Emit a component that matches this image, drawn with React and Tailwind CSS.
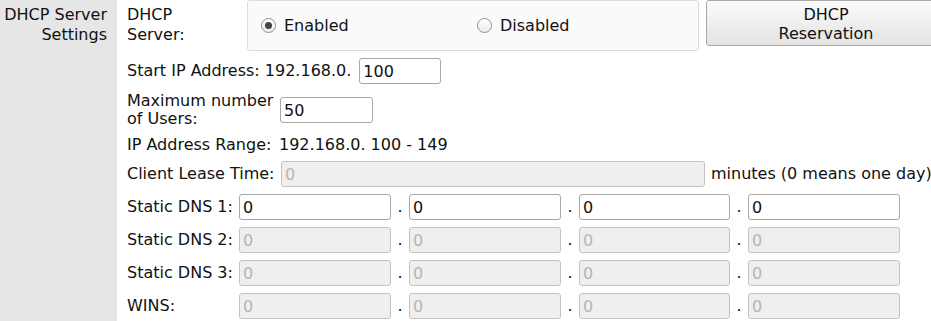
import React from "react";

function Radio({ checked, label }) {
    return (
        <label className="flex items-center gap-[8px]">
            <span className="w-[15px] h-[15px] rounded-full border border-[#8f8f8f] bg-gradient-to-b from-white to-[#ececec] flex items-center justify-center">
                {checked && <span className="w-[7px] h-[7px] rounded-full bg-[#444]" />}
            </span>
            <span>{label}</span>
        </label>
    );
}

function Field({ value, disabled, className = "" }) {
    return (
        <input
            type="text"
            defaultValue={value}
            disabled={disabled}
            className={
                "h-[26px] px-[3px] rounded-[3px] border outline-none " +
                (disabled
                    ? "bg-[#efefef] border-[#c2c2c2] text-[#b5b5b5] "
                    : "bg-white border-[#a8a8a8] text-[#111] ") +
                className
            }
        />
    );
}

function IpRow({ label, disabled }) {
    return (
        <div className="flex items-center h-[26px]">
            <div className="w-[112px]">{label}</div>
            <Field value="0" disabled={disabled} className="w-[152px]" />
            <span className="w-[18px] text-center">.</span>
            <Field value="0" disabled={disabled} className="w-[152px]" />
            <span className="w-[18px] text-center">.</span>
            <Field value="0" disabled={disabled} className="w-[151px]" />
            <span className="w-[18px] text-center">.</span>
            <Field value="0" disabled={disabled} className="w-[152px]" />
        </div>
    );
}

export default function App() {
    return (
        <div className="w-[931px] h-[321px] overflow-hidden flex bg-white text-[16px] text-[#111] font-['DejaVu_Sans',sans-serif]">
            <div className="w-[117px] shrink-0 bg-[#e6e6e6] text-right pr-[10px] pt-[5px] leading-[20px]">
                DHCP Server
                <br />
                Settings
            </div>
            <div className="flex-1 pl-[10px] flex flex-col">
                <div className="flex items-start h-[51px]">
                    <div className="w-[120px] pt-[5px] leading-[20px]">
                        DHCP
                        <br />
                        Server:
                    </div>
                    <div className="w-[452px] h-[51px] shrink-0 bg-[#fafafa] border border-[#dcdcdc] rounded-[3px] flex items-center pl-[13px]">
                        <div className="w-[216px]">
                            <Radio checked label="Enabled" />
                        </div>
                        <Radio label="Disabled" />
                    </div>
                    <button className="ml-[7px] w-[240px] shrink-0 h-[46px] pt-[1px] rounded-[3px] border border-[#a8a8a8] bg-gradient-to-b from-[#fbfbfb] to-[#e3e3e3] leading-[19px] text-center">
                        DHCP
                        <br />
                        Reservation
                    </button>
                </div>

                <div className="flex items-center h-[26px] mt-[7px]">
                    <span className="whitespace-pre">Start IP Address: 192.168.0.</span>
                    <Field value="100" className="w-[82px] ml-[8px]" />
                </div>

                <div className="flex items-center mt-[8px] h-[36px]">
                    <div className="w-[153px] leading-[18px]">
                        Maximum number
                        <br />
                        of Users:
                    </div>
                    <Field value="50" className="w-[93px]" />
                </div>

                <div className="flex items-center h-[18px] mt-[8px]">
                    <span className="w-[152px] whitespace-nowrap">IP Address Range:</span>
                    <span>192.168.0. 100 - 149</span>
                </div>

                <div className="flex items-center h-[26px] mt-[7px]">
                    <span className="w-[154px] whitespace-nowrap">Client Lease Time:</span>
                    <Field value="0" disabled className="w-[424px]" />
                    <span className="ml-[6px] whitespace-nowrap">minutes (0 means one day)</span>
                </div>

                <div className="flex flex-col gap-[7px] mt-[7px]">
                    <IpRow label="Static DNS 1:" />
                    <IpRow label="Static DNS 2:" disabled />
                    <IpRow label="Static DNS 3:" disabled />
                    <IpRow label="WINS:" disabled />
                </div>
            </div>
        </div>
    );
}
